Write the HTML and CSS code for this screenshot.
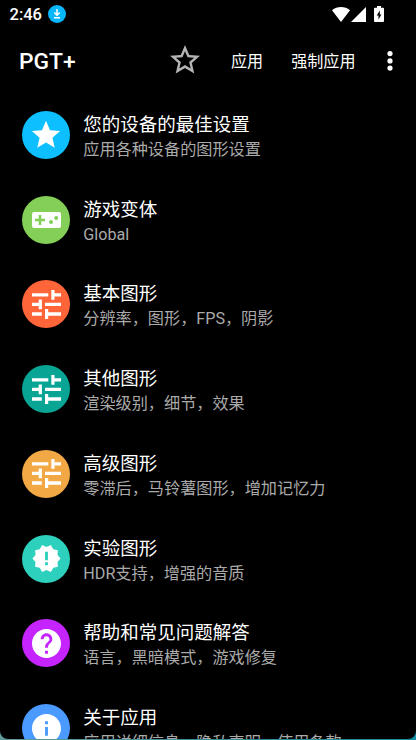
FILE: index.html
```html
<!DOCTYPE html>
<html lang="zh-CN">
<head>
<meta charset="utf-8">
<title>PGT+</title>
<link rel="stylesheet" href="styles.css">
</head>
<body>
<svg class="defs" aria-hidden="true">
  <symbol id="star" viewBox="0 0 24 24"><path d="M12 17.27 18.18 21l-1.64-7.03L22 9.24l-7.19-.61L12 2 9.19 8.63 2 9.24l5.46 4.73L5.82 21z"/></symbol>
  <symbol id="tune" viewBox="0 0 29 29"><path d="M0 3.200h16.300v3.400H0zM19.300 0h3.200v3.200H29v3.400h-6.500v3.200h-3.200zM0 12.800h6.700V9.600h3.200v9.600H6.700V16H0zM13 12.800h16V16H13zM0 22.300h9.800v3.400H0zM13 19h3.200v3.300H29v3.400H16.200V29H13z"/></symbol>
</svg>
<div class="screen">
  <header class="status">
    <span class="time">2:46</span>
    <svg class="download" viewBox="0 0 18 18"><circle cx="9" cy="9" r="9" fill="#06b7fb"/><path d="M9 4v6M6.300 7.500 9 10.200l2.700-2.700M6 12.700h6" fill="none" stroke="#fff" stroke-width="1.500"/></svg>
    <svg class="wifi" viewBox="0 0 18 15"><path d="M0 3.300C5-1.100 13-1.100 18 3.300L9 15z"/></svg>
    <svg class="signal" viewBox="0 0 15 15"><path d="M15 0v15H0z"/></svg>
    <svg class="battery" viewBox="0 0 10 16"><path d="M3 0h4v1.700h2q1 0 1 1V15q0 1-1 1H1q-1 0-1-1V2.700q0-1 1-1h2z"/><path d="M5.800 4.500 2.700 9.500h1.800V13.500l2.900-5H5.800z" fill="#000"/></svg>
  </header>
  <nav class="toolbar">
    <h1>PGT+</h1>
    <svg class="favorite" viewBox="0 0 24 24"><path d="m22 9.240-7.190-.62L12 2 9.190 8.630 2 9.240l5.460 4.730L5.820 21 12 17.270 18.180 21l-1.630-7.030L22 9.240zM12 15.400l-3.760 2.270 1-4.280-3.320-2.880 4.380-.38L12 6.100l1.710 4.040 4.380.38-3.320 2.880 1 4.280L12 15.400z"/></svg>
    <span class="apply">应用</span>
    <span class="force">强制应用</span>
    <svg class="more" viewBox="0 0 6 20"><circle cx="3" cy="2.600" r="2.600"/><circle cx="3" cy="9.900" r="2.600"/><circle cx="3" cy="17.100" r="2.600"/></svg>
  </nav>
  <main class="list">
    <section class="row">
      <div class="badge sky"><svg class="star-icon"><use href="#star"/></svg></div>
      <div class="copy"><h2>您的设备的最佳设置</h2><p>应用各种设备的图形设置</p></div>
    </section>
    <section class="row">
      <div class="badge green"><svg class="pad-icon" viewBox="0 0 29 16"><rect width="29" height="16" rx="2"/><path d="M3 8h10M8 3v10" fill="none" stroke="#83cf57" stroke-width="2.600"/><g fill="#83cf57"><circle cx="19" cy="10" r="2"/><circle cx="24.200" cy="6" r="2"/></g></svg></div>
      <div class="copy"><h2>游戏变体</h2><p>Global</p></div>
    </section>
    <section class="row">
      <div class="badge orange"><svg class="icon"><use href="#tune"/></svg></div>
      <div class="copy"><h2>基本图形</h2><p>分辨率，图形，FPS，阴影</p></div>
    </section>
    <section class="row">
      <div class="badge teal"><svg class="icon"><use href="#tune"/></svg></div>
      <div class="copy"><h2>其他图形</h2><p>渲染级别，细节，效果</p></div>
    </section>
    <section class="row">
      <div class="badge amber"><svg class="icon"><use href="#tune"/></svg></div>
      <div class="copy"><h2>高级图形</h2><p>零滞后，马铃薯图形，增加记忆力</p></div>
    </section>
    <section class="row">
      <div class="badge mint"><svg class="icon" viewBox="0.700 0.700 22.600 22.600"><path d="m23 12-2.440-2.780.34-3.680-3.610-.82-1.890-3.180L12 3 8.600 1.540 6.710 4.720l-3.610.81.34 3.680L1 12l2.440 2.780-.34 3.690 3.610.82 1.890 3.180L12 21l3.400 1.460 1.890-3.180 3.610-.82-.34-3.680z"/><path d="M10.900 6.700h2.200v6.600h-2.200zM10.900 15h2.200v2.200h-2.200z" fill="#2dd0bd"/></svg></div>
      <div class="copy"><h2>实验图形</h2><p>HDR支持，增强的音质</p></div>
    </section>
    <section class="row">
      <div class="badge purple"><svg class="icon" viewBox="2 2 20 20"><path d="M12 2C6.480 2 2 6.480 2 12s4.480 10 10 10 10-4.480 10-10S17.520 2 12 2zm1 17h-2v-2h2v2zm2.070-7.750-.9.920C13.450 12.900 13 13.500 13 15h-2v-.5c0-1.100.45-2.100 1.170-2.830l1.240-1.260c.37-.36.59-.86.59-1.410 0-1.100-.9-2-2-2s-2 .9-2 2H8c0-2.210 1.790-4 4-4s4 1.790 4 4c0 .88-.36 1.680-.93 2.250z"/></svg></div>
      <div class="copy"><h2>帮助和常见问题解答</h2><p>语言，黑暗模式，游戏修复</p></div>
    </section>
    <section class="row">
      <div class="badge blue"><svg class="icon" viewBox="2 2 20 20"><path d="M12 2C6.480 2 2 6.480 2 12s4.480 10 10 10 10-4.480 10-10S17.520 2 12 2zm1 15h-2v-6h2v6zm0-8h-2V7h2v2z"/></svg></div>
      <div class="copy"><h2>关于应用</h2><p>应用详细信息，隐私声明，使用条款</p></div>
    </section>
  </main>
</div>
</body>
</html>
```
FILE: styles.css
```css
* { box-sizing: border-box; }
body {
  margin: 0;
  height: 740px;
  overflow: hidden;
  background: linear-gradient(90deg, #5f9c9c, #2f8a95 60%, #168fa6);
  color: #fff;
  font-family: Roboto, "Noto Sans CJK SC", sans-serif;
}
h1, h2, p { margin: 0; }
svg { display: block; flex: none; fill: #fff; }
.defs { display: none; }
.screen {
  height: 739px;
  overflow: hidden;
  background: #000;
  border-radius: 0 0 8px 8px;
}
.status {
  display: flex;
  align-items: center;
  height: 28px;
  padding: 0 32px 0 9.500px;
}
.time { width: 38.500px; padding-top: 1px; font-size: 16.500px; font-weight: 500; line-height: 28px; }
.download { width: 18px; height: 18px; }
.wifi { width: 18px; height: 15px; margin-left: auto; }
.signal { width: 15px; height: 15px; margin-left: 1px; }
.battery { width: 10px; height: 16px; margin-left: 8px; }
.toolbar {
  display: flex;
  align-items: center;
  height: 64px;
  padding-left: 19px;
}
h1 { width: 147.500px; padding-top: 3px; font-size: 22.800px; font-weight: 500; line-height: 30px; }
.favorite { width: 36px; height: 36px; fill: #b4b4b4; }
.apply, .force { padding-top: 3px; font-size: 16.100px; line-height: 24px; white-space: nowrap; }
.apply { margin-left: 28.500px; }
.force { margin-left: 28px; }
.more { width: 6px; height: 20px; margin: 1px 0 0 31px; }
.list { padding-top: 0.500px; }
.row {
  display: flex;
  align-items: center;
  gap: 13.300px;
  height: 84.750px;
  padding-left: 22px;
}
.badge {
  display: flex;
  flex: none;
  align-items: center;
  justify-content: center;
  width: 48px;
  height: 48px;
  border-radius: 50%;
}
.icon { width: 29px; height: 29px; }
.star-icon { width: 34px; height: 34px; }
.pad-icon { width: 29px; height: 16px; }
.sky { background: #0dbfff; }
.green { background: #83cf57; }
.orange { background: #ff6538; }
.teal { background: #08a594; }
.amber { background: #f3a846; }
.mint { background: #2dd0bd; }
.purple { background: #c624ff; }
.blue { background: #4b9aff; }
.copy { padding-top: 4px; white-space: nowrap; }
h2 { font-size: 18.500px; font-weight: 400; line-height: 25px; }
p { color: #aaa; font-size: 16.150px; line-height: 23px; }
```
